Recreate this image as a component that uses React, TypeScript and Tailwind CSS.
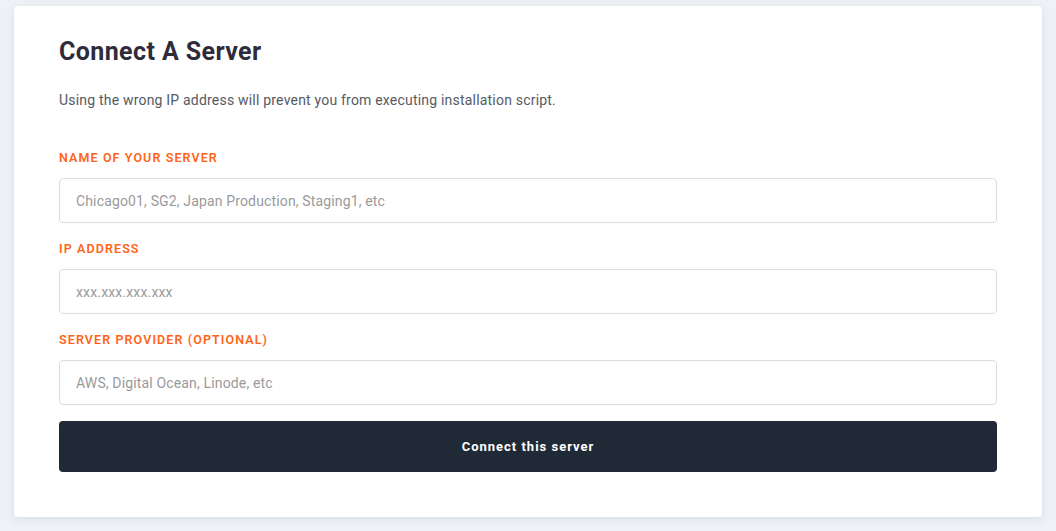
import React from 'react';

const fields = [
  { label: 'Name of your server', placeholder: 'Chicago01, SG2, Japan Production, Staging1, etc' },
  { label: 'IP address', placeholder: 'xxx.xxx.xxx.xxx' },
  { label: 'Server provider (optional)', placeholder: 'AWS, Digital Ocean, Linode, etc' },
];

const App: React.FC = () => {
  return (
    <div
      className="min-h-[531px] bg-[#eef2f6] pt-[6px] pl-[14px] pr-[14px]"
      style={{ fontFamily: 'Roboto, "Liberation Sans", sans-serif' }}
    >
      <div className="bg-white rounded-[4px] shadow-[0_2px_8px_rgba(30,50,80,0.10)] px-[45px] pt-[30px] pb-[45px]">
        <h1 className="text-[25px] font-bold text-[#2f2b3a] leading-[32px] tracking-[0.4px]">Connect A Server</h1>
        <p className="mt-[22px] text-[14px] text-[#555a63] leading-[20px] tracking-[0.2px]">
          Using the wrong IP address will prevent you from executing installation script.
        </p>

        <form className="mt-[40px] flex flex-col" onSubmit={(e) => e.preventDefault()}>
          {fields.map((f, i) => (
            <div key={f.label} className={i < fields.length - 1 ? 'mb-[18px]' : ''}>
              <label className="block uppercase text-[12.5px] font-semibold tracking-[1.1px] text-[#ff6418] leading-[16px]">
                {f.label}
              </label>
              <input
                className="mt-[12px] w-full h-[45px] border border-[#dcdcdc] rounded-[4px] px-[16px] text-[14px] tracking-[0.15px] text-[#333] placeholder:text-[#9a9a9a] outline-none"
                placeholder={f.placeholder}
              />
            </div>
          ))}
          <button
            type="submit"
            className="mt-[16px] h-[51px] w-full bg-[#1f2a36] rounded-[4px] text-white text-[13px] font-bold tracking-[1px]"
          >
            Connect this server
          </button>
        </form>
      </div>
    </div>
  );
};

export default App;
